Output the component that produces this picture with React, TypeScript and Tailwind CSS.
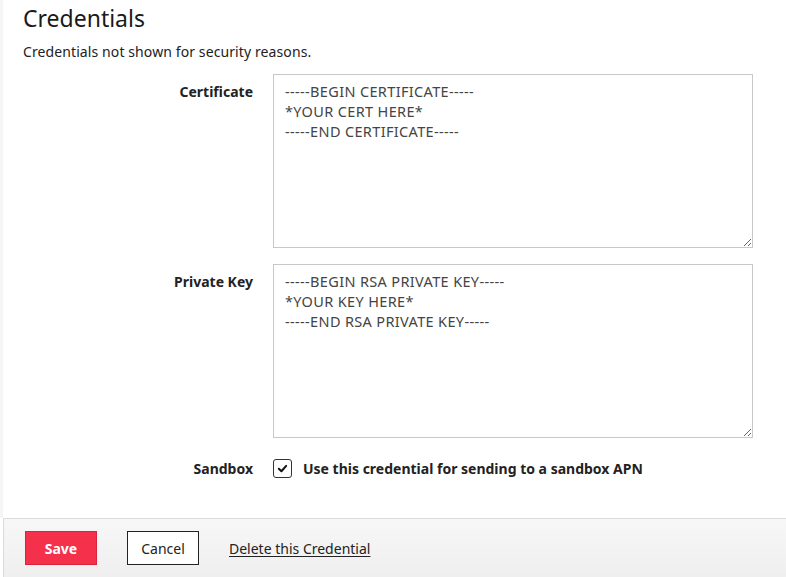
import React from "react";

const certText = "-----BEGIN CERTIFICATE-----\n*YOUR CERT HERE*\n-----END CERTIFICATE-----";
const keyText = "-----BEGIN RSA PRIVATE KEY-----\n*YOUR KEY HERE*\n-----END RSA PRIVATE KEY-----";

const Field = ({ label, value }: { label: string; value: string }) => (
  <div className="flex items-start">
    <label className="w-[253px] pt-[7px] text-right text-[14px] font-bold text-[#222]">{label}</label>
    <textarea
      defaultValue={value}
      className="ml-[20px] h-[174px] w-[480px] resize border border-[#c8c8c8] bg-white px-[11px] py-[6px] text-[14.5px] leading-[20px] tracking-[0.35px] text-[#444] outline-none"
    />
  </div>
);

const App = () => {
  return (
    <div className="flex h-[577px] w-[786px] flex-col bg-white font-['Noto_Sans',sans-serif] text-[#222]">
      <div className="flex flex-1 border-l-[3px] border-[#f5f5f5]">
        <div className="flex flex-1 flex-col">
          <h1 className="pl-[20px] pt-[3px] text-[23px] leading-[30px] text-[#1a1a1a]">Credentials</h1>
          <p className="pl-[20px] pt-[9px] text-[14px] leading-[20px] tracking-[0.1px] text-[#222]">
            Credentials not shown for security reasons.
          </p>
          <div className="-ml-[3px] mt-[12px] flex flex-col gap-[16px]">
            <Field label="Certificate" value={certText} />
            <Field label="Private Key" value={keyText} />
            <div className="flex items-center pt-[4px]">
              <span className="w-[253px] text-right text-[14px] font-bold text-[#222]">Sandbox</span>
              <span className="ml-[20px] flex h-[19px] w-[19px] items-center justify-center rounded-[3px] border border-[#333] bg-white">
                <svg viewBox="0 0 12 12" className="h-[11px] w-[11px]">
                  <path d="M2 6.3 L4.8 9 L10 3.2" fill="none" stroke="#111" strokeWidth="2.2" strokeLinecap="round" strokeLinejoin="round" />
                </svg>
              </span>
              <span className="ml-[11px] text-[14px] font-bold text-[#222]">
                Use this credential for sending to a sandbox APN
              </span>
            </div>
          </div>
        </div>
      </div>
      <div className="ml-[3px] flex h-[59px] items-center gap-[30px] border-l border-t border-[#dcdcdc] bg-gradient-to-b from-[#f7f7f7] to-[#efefef] pl-[21px]">
        <button className="h-[34px] w-[72px] border border-[#d9243c] bg-[#f4304a] text-[14px] font-bold text-white">
          Save
        </button>
        <button className="h-[34px] w-[72px] border border-[#222] bg-white text-[14px] text-[#222]">
          Cancel
        </button>
        <a href="#" className="text-[14px] text-[#222] underline underline-offset-2">
          Delete this Credential
        </a>
      </div>
    </div>
  );
};

export default App;
